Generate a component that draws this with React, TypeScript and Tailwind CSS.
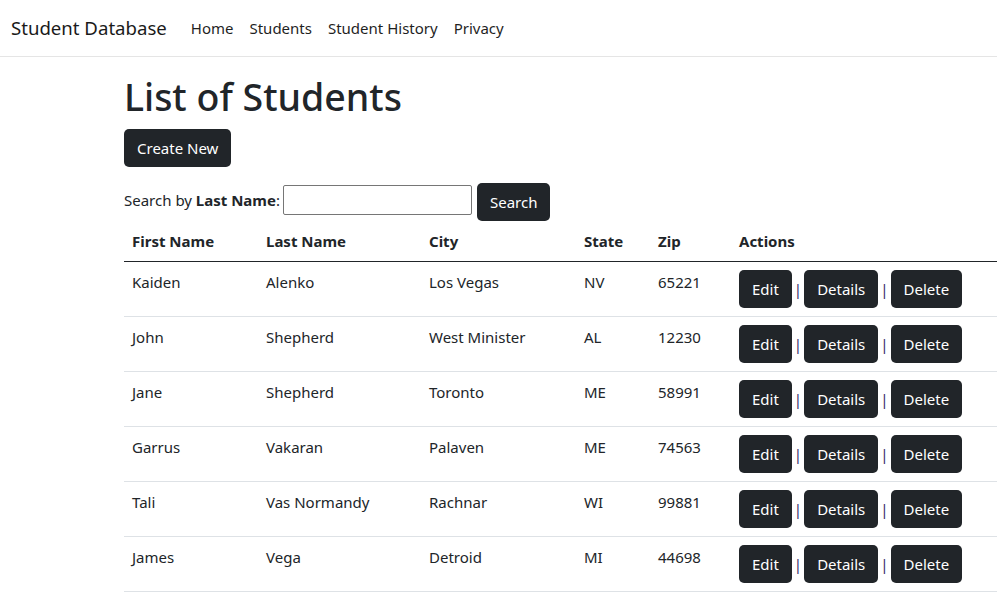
import React from "react";

type Student = {
  first: string;
  last: string;
  city: string;
  state: string;
  zip: string;
};

const students: Student[] = [
  { first: "Kaiden", last: "Alenko", city: "Los Vegas", state: "NV", zip: "65221" },
  { first: "John", last: "Shepherd", city: "West Minister", state: "AL", zip: "12230" },
  { first: "Jane", last: "Shepherd", city: "Toronto", state: "ME", zip: "58991" },
  { first: "Garrus", last: "Vakaran", city: "Palaven", state: "ME", zip: "74563" },
  { first: "Tali", last: "Vas Normandy", city: "Rachnar", state: "WI", zip: "99881" },
  { first: "James", last: "Vega", city: "Detroid", state: "MI", zip: "44698" },
];

const navLinks = ["Home", "Students", "Student History", "Privacy"];

const btn =
  "inline-block bg-[#212529] text-white text-[15px] leading-6 px-[13px] py-[7px] rounded-[5px]";

export default function App() {
  return (
    <div className="min-h-screen bg-white text-[#212529] font-['Noto_Sans',sans-serif] text-[15px] leading-6">
      <nav className="flex items-center h-[57px] border-b border-[#e5e5e5] pl-[11px] mb-4">
        <span className="text-[18.6px] leading-[30px] mr-4 text-[#1a1a1a]">Student Database</span>
        <div className="flex">
          {navLinks.map((l) => (
            <a key={l} className="px-2 text-[#1f1f1f]">
              {l}
            </a>
          ))}
        </div>
      </nav>

      <main className="pl-[124px]">
        <h1 className="text-[37.5px] leading-[48px] font-medium mb-2">List of Students</h1>
        <p className="mb-4">
          <a className={btn}>Create New</a>
        </p>

        <form className="flex items-start">
          <label className="mt-[5px]">
            Search by <b className="font-bold">Last Name</b>:
          </label>
          <input
            type="text"
            className="ml-[3px] mt-[2px] w-[189px] h-[30px] border border-[#767676] rounded-[2px] px-1"
          />
          <button type="button" className={btn + " ml-[5px]"}>
            Search
          </button>
        </form>

        <table className="w-full table-fixed border-collapse">
          <colgroup>
            <col className="w-[134px]" />
            <col className="w-[163px]" />
            <col className="w-[155px]" />
            <col className="w-[74px]" />
            <col className="w-[81px]" />
            <col />
          </colgroup>
          <thead>
            <tr className="border-b border-[#212529] text-left">
              {["First Name", "Last Name", "City", "State", "Zip", "Actions"].map((h) => (
                <th key={h} className="p-2 font-bold">
                  {h}
                </th>
              ))}
            </tr>
          </thead>
          <tbody>
            {students.map((s) => (
              <tr key={s.first} className="border-b border-[#dee2e6] align-top">
                <td className="p-2">{s.first}</td>
                <td className="p-2">{s.last}</td>
                <td className="p-2">{s.city}</td>
                <td className="p-2">{s.state}</td>
                <td className="p-2">{s.zip}</td>
                <td className="p-2 whitespace-nowrap">
                  <a className={btn}>Edit</a>
                  <span className="px-[2px] text-[#3b2a6b]">|</span>
                  <a className={btn}>Details</a>
                  <span className="px-[2px] text-[#3b2a6b]">|</span>
                  <a className={btn}>Delete</a>
                </td>
              </tr>
            ))}
          </tbody>
        </table>
      </main>
    </div>
  );
}
